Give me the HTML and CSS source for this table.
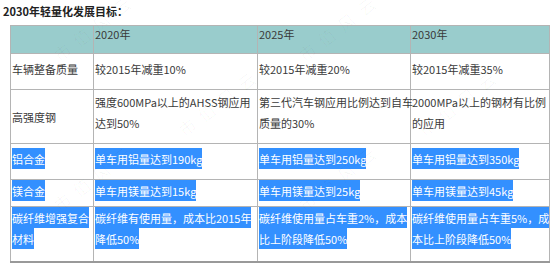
FILE: index.html
```html
<!DOCTYPE html>
<html lang="zh-CN">
<head>
<meta charset="utf-8">
<link rel="stylesheet" href="styles.css">
</head>
<body>
<div class="page">
  <div class="title">2030年轻量化发展目标：</div>
  <table class="goals">
    <colgroup>
      <col class="c1"><col class="c2"><col class="c3"><col class="c4">
    </colgroup>
    <tr class="head">
      <td></td><td>2020年</td><td>2025年</td><td>2030年</td>
    </tr>
    <tr class="r1">
      <td>车辆整备质量</td><td>较2015年减重10%</td><td>较2015年减重20%</td><td>较2015年减重35%</td>
    </tr>
    <tr class="r2">
      <td class="mid">高强度钢</td>
      <td>强度600MPa以上的AHSS钢应用<br>达到50%</td>
      <td>第三代汽车钢应用比例达到自车<br>质量的30%</td>
      <td>2000MPa以上的钢材有比例<br>的应用</td>
    </tr>
    <tr class="r3">
      <td><span class="sel">铝合金</span></td>
      <td><span class="sel">单车用铝量达到190kg</span></td>
      <td><span class="sel">单车用铝量达到250kg</span></td>
      <td><span class="sel">单车用铝量达到350kg</span></td>
    </tr>
    <tr class="r4">
      <td><span class="sel">镁合金</span></td>
      <td><span class="sel">单车用镁量达到15kg</span></td>
      <td><span class="sel">单车用镁量达到25kg</span></td>
      <td><span class="sel">单车用镁量达到45kg</span></td>
    </tr>
    <tr class="r5">
      <td><span class="sel">碳纤维增强复合<br>材料</span></td>
      <td><span class="sel">碳纤维有使用量，成本比2015年<br>降低50%</span></td>
      <td><span class="sel">碳纤维使用量占车重2%，成本<br>比上阶段降低50%</span></td>
      <td><span class="sel">碳纤维使用量占车重5%，成<br>本比上阶段降低50%</span></td>
    </tr>
  </table>
  <div class="wm w1">市值风云</div>
  <div class="wm w2">市值风云</div>
  <div class="wm w3">市值风云</div>
  <div class="wm w4">市值风云</div>
  <div class="wm w5">市值风云</div>
  <div class="wm w6">市值风云</div>
</div>
</body>
</html>
```
FILE: styles.css
```css
html, body {
  margin: 0;
  padding: 0;
  background: #fff;
}
.page {
  position: relative;
  width: 550px;
  height: 266px;
  overflow: hidden;
  font-family: "Noto Sans CJK SC", "Noto Sans", sans-serif;
  color: #3a3a3a;
}
.title {
  font-size: 11px;
  font-weight: bold;
  line-height: 14px;
  padding: 4px 0 0 3px;
  height: 25px;
  box-sizing: border-box;
  color: #222;
}
.goals {
  margin-left: 10px;
  width: 539px;
  table-layout: fixed;
  border-collapse: collapse;
  font-size: 11px;
  line-height: 21px;
  border-bottom: 2px solid #999;
}
.c1 { width: 83px; }
.c2 { width: 164px; }
.c3 { width: 153px; }
.c4 { width: 139px; }
.goals td {
  border: 1px solid #b4b4b4;
  padding: 0 0 0 1px;
  vertical-align: top;
  white-space: nowrap;
  overflow: visible;
}
.goals td.mid { vertical-align: middle; }
.head td {
  background: #99cccc;
  height: 27px;
  line-height: 16px;
}
.r1 td { height: 30px; padding-top: 5px; }
.r2 td { height: 51px; padding-top: 2px; }
.r3 td { height: 31px; padding-top: 4px; }
.r4 td { height: 26px; padding-top: 0; }
.r5 td { height: 54px; padding-top: 0; }
.sel {
  background: #3390ff;
  color: #fff;
  padding: 2.5px 0;
}
.wm {
  position: absolute;
  font-family: "Liberation Serif", serif;
  font-size: 17px;
  letter-spacing: 8px;
  color: rgba(0, 0, 0, 0.03);
  transform: rotate(-38deg);
  transform-origin: left center;
  pointer-events: none;
  white-space: nowrap;
}
.w1 { left: 55px; top: 45px; }
.w2 { left: 300px; top: 45px; }
.w3 { left: 180px; top: 120px; }
.w4 { left: 420px; top: 120px; }
.w5 { left: 55px; top: 195px; }
.w6 { left: 300px; top: 195px; }
```
